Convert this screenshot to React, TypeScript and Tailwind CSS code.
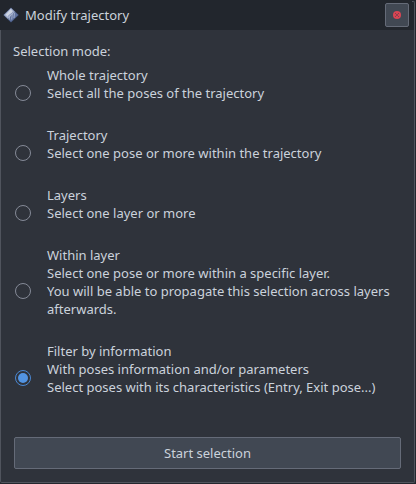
import React from "react";

type Mode = { title: string; lines: string[] };

const MODES: Mode[] = [
  { title: "Whole trajectory", lines: ["Select all the poses of the trajectory"] },
  { title: "Trajectory", lines: ["Select one pose or more within the trajectory"] },
  { title: "Layers", lines: ["Select one layer or more"] },
  {
    title: "Within layer",
    lines: [
      "Select one pose or more within a specific layer.",
      "You will be able to propagate this selection across layers",
      "afterwards.",
    ],
  },
  {
    title: "Filter by information",
    lines: ["With poses information and/or parameters", "Select poses with its characteristics (Entry, Exit pose...)"],
  },
];

function Radio({ checked }: { checked: boolean }) {
  return (
    <span
      className={
        "flex h-4 w-4 shrink-0 items-center justify-center rounded-full border " +
        (checked ? "border-[#4a87d2]" : "border-[#858a97]")
      }
    >
      {checked && <span className="h-[10px] w-[10px] rounded-full bg-[#5294e2]" />}
    </span>
  );
}

function AppIcon() {
  return (
    <svg width="16" height="16" viewBox="0 0 16 16" className="shrink-0">
      <path d="M8 0.5 15.8 8 8 15.5 0.2 8Z" fill="#43557f" />
      <path d="M8 1 12 5 5 12 0.9 8Z" fill="#a3afcb" />
      <path d="M7.8 2 10 5.3 4.6 9.6 2.6 7.8Z" fill="#ccd3e2" />
      <path d="M12 5 15 8 8 14.8 5.6 12.3Z" fill="#5f729f" />
      <path d="M7 7.5 6.2 12.8M9.3 6.5 8.7 12.5M11.4 5.8 11 11" stroke="#b3bed7" strokeWidth="0.8" />
      <path d="M5.2 9 10.5 4.8" stroke="#6b7daa" strokeWidth="0.6" />
    </svg>
  );
}

export default function App() {
  return (
    <div className="flex h-[484px] w-[416px] flex-col bg-[#23272e] font-['Noto_Sans',sans-serif] text-[13px] leading-[18px] text-[#cbd2db]">
      <header className="relative flex h-[30px] shrink-0 items-center bg-[#22262d] pl-[3px] pr-[7px]">
        <AppIcon />
        <h1 className="ml-[6px] flex-1">Modify trajectory</h1>
        <button aria-label="Close" className="flex h-6 w-6 items-center justify-center rounded-[2px] border border-[#656b78] bg-[#414853]">
          <svg width="8" height="8" viewBox="0 0 8 8">
            <circle cx="4" cy="4" r="4" fill="#da4453" />
            <path d="m2.2 2.2 3.6 3.6m0-3.6-3.6 3.6" stroke="#6f414e" strokeWidth="1" />
            <rect x="3.3" y="3.3" width="1.4" height="1.4" fill="#b34250" />
          </svg>
        </button>
        <span className="absolute right-px top-px h-[29px] w-[3px] rounded-tr-[2px] border-r border-t border-[#50545d]" />
      </header>
      <main className="mr-[1px] flex h-[453px] flex-col rounded-b-[2px] border-x border-b border-[#50545d] bg-[#2f333b] px-[13px] pt-3">
        <p className="-ml-px">Selection mode:</p>
        <div className="mt-[6px] flex flex-col gap-[6px]">
          {MODES.map((mode, i) => (
            <label key={mode.title} className="flex items-center gap-4 pl-px">
              <Radio checked={i === 4} />
              <span className="whitespace-nowrap pb-[18px]">
                <span className="block">{mode.title}</span>
                {mode.lines.map((line) => (
                  <span key={line} className="block">{line}</span>
                ))}
              </span>
            </label>
          ))}
        </div>
        <button className="mt-[23px] h-8 w-[387px] shrink-0 rounded-[2px] border border-[#656b78] bg-[#414853]">
          Start selection
        </button>
      </main>
    </div>
  );
}
